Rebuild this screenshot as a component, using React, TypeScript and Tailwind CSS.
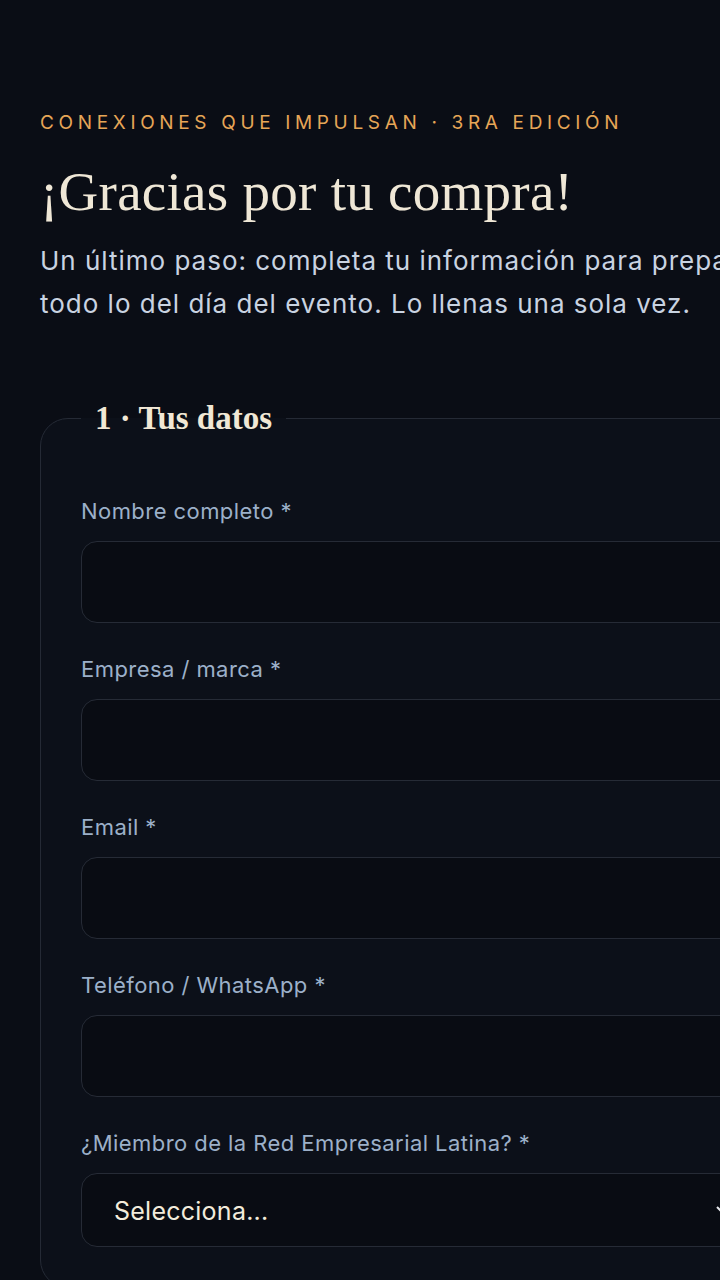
import React from "react";

const fields = [
  "Nombre completo *",
  "Empresa / marca *",
  "Email *",
  "Teléfono / WhatsApp *",
];

export default function App() {
  return (
    <div
      className="h-screen w-full overflow-hidden bg-[#0a0d15]"
      style={{ fontFamily: "Inter, 'Noto Sans', sans-serif" }}
    >
      <div className="w-[835px] px-10 pt-[109px] pb-20">
        <p className="text-[19px] leading-[27px] tracking-[0.245em] text-[#e6a657] uppercase">
          Conexiones que impulsan · 3ra edición
        </p>
        <h1
          className="mt-[26px] text-[55px] leading-[1.08] text-[#efe7d6] tracking-[0.005em]"
          style={{ fontFamily: "'Liberation Serif', 'DejaVu Serif', serif" }}
        >
          ¡Gracias por tu compra!
        </h1>
        <p className="mt-[19px] text-[26px] leading-[1.65] tracking-[0.038em] text-[#c9d3e1]">
          Un último paso: completa tu información para preparar todo lo del día del evento. Lo llenas una sola vez.
        </p>

        <fieldset className="mt-[73px] rounded-[28px] border border-[#252a35] bg-[#0c1019] px-10 pt-[58px] pb-10">
          <legend
            className="px-[14px] text-[33px] leading-[1.2] font-bold text-[#f1e8d5]"
            style={{ fontFamily: "'Liberation Serif', 'DejaVu Serif', serif" }}
          >
            1 · Tus datos
          </legend>
          <div className="flex flex-col gap-8">
            {fields.map((f) => (
              <div key={f} className="flex flex-col">
                <label className="mb-4 text-[22px] leading-[28px] tracking-[0.02em] text-[#9cb0c9]">{f}</label>
                <input
                  type="text"
                  className="h-[82px] w-full rounded-2xl border border-[#262b36] bg-[#090c13] px-8 text-[24px] text-[#f1ead8] outline-none"
                />
              </div>
            ))}
            <div className="flex flex-col">
              <label className="mb-4 text-[22px] leading-[28px] tracking-[0.02em] text-[#9cb0c9]">
                ¿Miembro de la Red Empresarial Latina? *
              </label>
              <div className="relative">
                <select className="h-[74px] w-full appearance-none rounded-2xl border border-[#262b36] bg-[#090c13] px-8 pt-[3px] text-[25px] tracking-[0.01em] text-[#f3ecdc] outline-none">
                  <option>Selecciona...</option>
                  <option>Sí</option>
                  <option>No</option>
                </select>
                <svg
                  className="pointer-events-none absolute right-[24px] top-1/2 -translate-y-1/2"
                  width="14"
                  height="10"
                  viewBox="0 0 14 10"
                  fill="none"
                >
                  <path d="M1 2l6 6 6-6" stroke="#e5e7eb" strokeWidth="2" />
                </svg>
              </div>
            </div>
          </div>
        </fieldset>
      </div>
    </div>
  );
}
